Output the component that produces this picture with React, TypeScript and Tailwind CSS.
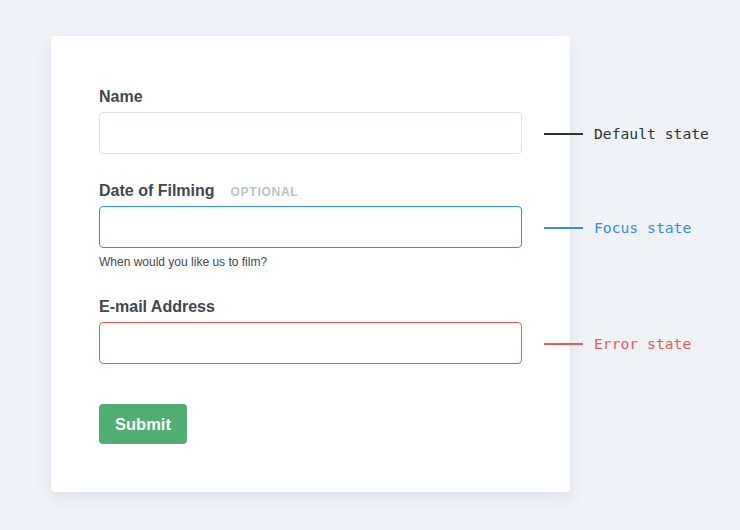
export default function App() {
  return (
    <div className="min-h-screen w-full bg-[#eff2f7] pl-[51px] pt-9 font-['Liberation_Sans',Arial,sans-serif]">
      <form
        className="w-[519px] rounded bg-white px-12 pb-12 pt-12 shadow-[0_6px_16px_rgba(0,0,0,0.08)]"
        onSubmit={(e) => e.preventDefault()}
      >
        {/* Name */}
        <label className="mb-1 block pt-px text-base font-bold leading-[23px] text-[#3d4852]">Name</label>
        <div className="relative">
          <input className="block h-[42px] w-full rounded border border-[#dae1e7] bg-white px-3 outline-none" />
          <Note color="#2d333a" text="Default state" />
        </div>

        {/* Date */}
        <div className="mb-1 mt-6 flex h-6 items-baseline gap-4 pt-px">
          <label className="text-base font-bold leading-[23px] text-[#3d4852]">Date of Filming</label>
          <span className="text-[12px] font-bold leading-4 tracking-[0.06em] text-[#b8c2cc]">OPTIONAL</span>
        </div>
        <div className="relative">
          <input className="block h-[42px] w-full rounded border border-[#3490dc] bg-white px-3 outline-none" />
          <Note color="#3490dc" text="Focus state" />
        </div>
        <p className="mt-1.5 text-[12px] leading-4 text-[#3d4852]">When would you like us to film?</p>

        {/* Email */}
        <label className="mb-1 mt-6 block pt-px text-base font-bold leading-[23px] text-[#3d4852]">E-mail Address</label>
        <div className="relative">
          <input className="block h-[42px] w-full rounded border border-[#ef5753] bg-white px-3 outline-none" />
          <Note color="#ef5753" text="Error state" />
        </div>

        <button
          type="submit"
          className="mt-10 h-10 rounded bg-[#51ad70] px-4 text-[16.5px] font-bold text-white"
        >
          Submit
        </button>
      </form>
    </div>
  );
}

function Note({ color, text }: { color: string; text: string }) {
  return (
    <div
      className="absolute left-[calc(100%+22px)] top-[calc(50%+1px)] flex -translate-y-1/2 items-center gap-[11px] whitespace-nowrap"
      style={{ color }}
    >
      <span className="block h-[2px] w-[39px]" style={{ backgroundColor: color }} />
      <span className="font-['DejaVu_Sans_Mono',monospace] text-[14.7px] leading-5">{text}</span>
    </div>
  );
}
